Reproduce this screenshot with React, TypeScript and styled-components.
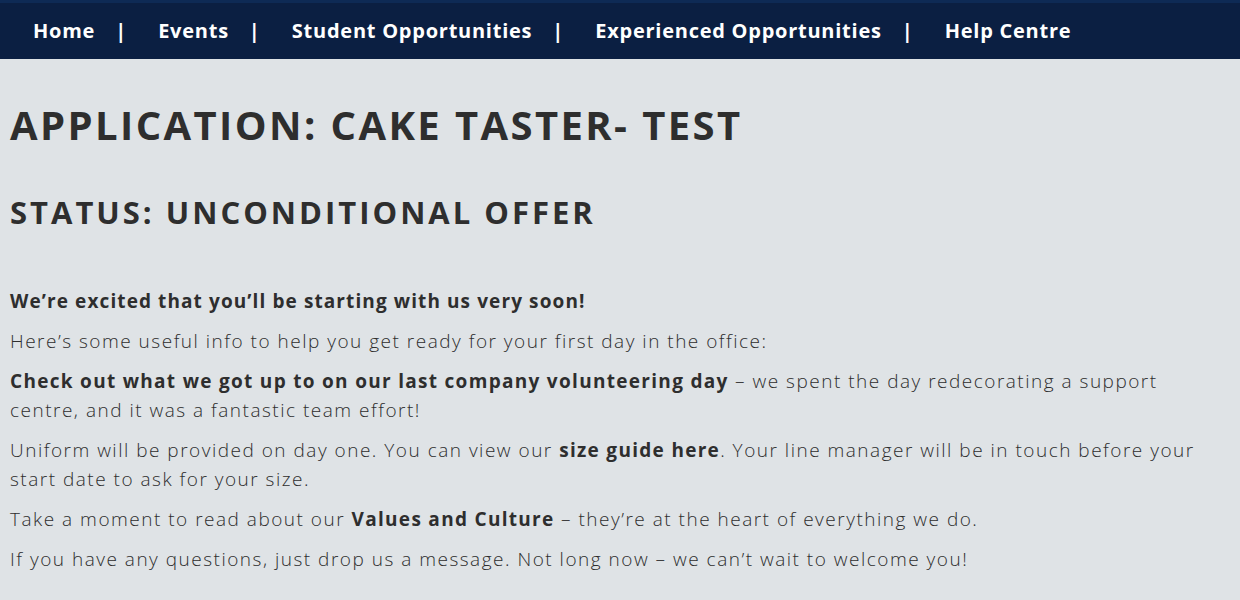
import React from "react";
import styled, { createGlobalStyle } from "styled-components";

const Global = createGlobalStyle`
  html, body { margin: 0; padding: 0; background: #dfe3e6; }
  body { font-family: "Open Sans", "Liberation Sans", sans-serif; color: #2e2e2e; }
  * { box-sizing: border-box; }
`;

const NavBar = styled.nav`
  height: 59px;
  background: #0b1f42;
  border-top: 3px solid #0e2a55;
  display: flex;
  align-items: center;
  padding: 0 0 2px 33px;
`;

const NavItem = styled.a`
  color: #fff;
  font-weight: 700;
  font-size: 20px;
  letter-spacing: 0.75px;
  text-decoration: none;
  white-space: nowrap;
`;

const Sep = styled.span`
  color: #fff;
  font-weight: 700;
  font-size: 20px;
  margin: 0 32px 0 20px;
`;

const Main = styled.main`
  padding: 0 30px 0 10px;
`;

const H1 = styled.h1`
  margin: 38px 0 0;
  font-size: 40px;
  line-height: 56px;
  font-weight: 700;
  letter-spacing: 2.4px;
  color: #2e2e2e;
`;

const H2 = styled.h2`
  margin: 37px 0 0;
  font-size: 31px;
  line-height: 44px;
  font-weight: 700;
  letter-spacing: 3px;
  color: #2e2e2e;
`;

const Para = styled.p<{ $strong?: boolean; $first?: boolean }>`
  margin: ${(p) => (p.$first ? "53px" : "11px")} 0 0;
  font-size: 19px;
  line-height: 29px;
  font-weight: ${(p) => (p.$strong ? 700 : 300)};
  letter-spacing: ${(p) => (p.$strong ? "1.1px" : "1.5px")};
  color: #2e2e2e;
`;

const B = styled.strong`
  font-weight: 700;
  letter-spacing: 1.3px;
`;

const navItems = [
  "Home",
  "Events",
  "Student Opportunities",
  "Experienced Opportunities",
  "Help Centre",
];

export default function App() {
  return (
    <>
      <Global />
      <NavBar>
        {navItems.map((n, i) => (
          <React.Fragment key={n}>
            <NavItem href="#">{n}</NavItem>
            {i < navItems.length - 1 && <Sep>|</Sep>}
          </React.Fragment>
        ))}
      </NavBar>
      <Main>
        <H1>APPLICATION: CAKE TASTER- TEST</H1>
        <H2>STATUS: UNCONDITIONAL OFFER</H2>
        <Para $strong $first>We’re excited that you’ll be starting with us very soon!</Para>
        <Para>Here’s some useful info to help you get ready for your first day in the office:</Para>
        <Para>
          <B>Check out what we got up to on our last company volunteering day</B> – we spent the day
          redecorating a support centre, and it was a fantastic team effort!
        </Para>
        <Para>
          Uniform will be provided on day one. You can view our <B>size guide here</B>. Your line
          manager will be in touch before your start date to ask for your size.
        </Para>
        <Para>
          Take a moment to read about our <B>Values and Culture</B> – they’re at the heart of
          everything we do.
        </Para>
        <Para>
          If you have any questions, just drop us a message. Not long now – we can’t wait to welcome
          you!
        </Para>
      </Main>
    </>
  );
}
